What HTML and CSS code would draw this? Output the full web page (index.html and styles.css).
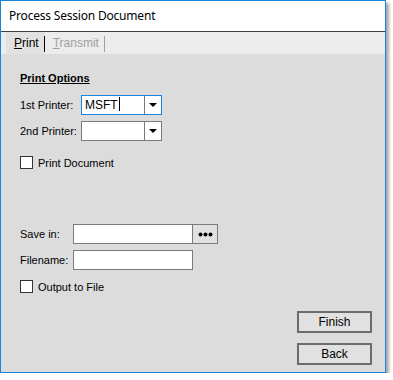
FILE: index.html
```html
<!DOCTYPE html>
<html>
<head>
  <title>Process Session Document</title>
  <link rel="stylesheet" href="styles.css">
</head>
<body>

  <div class="window">
    <div class="titlebar">Process Session Document</div>

    <div class="tabstrip">
      <div class="tab active"><u>P</u>rint</div>
      <div class="tab disabled"><u>T</u>ransmit</div>
    </div>

    <div class="panel">
      <div class="heading">Print Options</div>

      <div class="row first">
        <span class="label wide">1st Printer:</span>
        <div class="combo focused">
          <span class="combo-text">MSFT<span class="caret"></span></span>
          <span class="combo-btn"><span class="arrow"></span></span>
        </div>
      </div>

      <div class="row">
        <span class="label wide">2nd Printer:</span>
        <div class="combo">
          <span class="combo-text"></span>
          <span class="combo-btn"><span class="arrow"></span></span>
        </div>
      </div>

      <label class="check first-check">
        <span class="box"></span>
        <span>Print Document</span>
      </label>

      <div class="row save-row">
        <span class="label">Save in:</span>
        <div class="browse">
          <span class="browse-text"></span>
          <span class="browse-btn">
            <svg width="15" height="5" viewBox="0 0 15 5">
              <circle cx="2.5" cy="2.5" r="2" fill="#000"/>
              <circle cx="7.5" cy="2.5" r="2" fill="#000"/>
              <circle cx="12.5" cy="2.5" r="2" fill="#000"/>
            </svg>
          </span>
        </div>
      </div>

      <div class="row">
        <span class="label">Filename:</span>
        <div class="textbox"></div>
      </div>

      <label class="check second-check">
        <span class="box"></span>
        <span>Output to File</span>
      </label>

      <div class="actions">
        <button class="button">Finish</button>
        <button class="button">Back</button>
      </div>
    </div>
  </div>

</body>
</html>
```

FILE: styles.css
```css
body {
  margin: 0;
  background-color: #fff;
  font-family: "Liberation Sans", Arial, sans-serif;
  font-size: 11px;
  color: #000;
}

.window {
  width: 386px;
  height: 373px;
  box-sizing: border-box;
  border: 1px solid #1a83d6;
  display: flex;
  flex-direction: column;
  box-shadow: 3px 3px 3px rgba(0, 0, 0, 0.35);
}

.titlebar {
  height: 30px;
  line-height: 30px;
  padding-left: 8px;
  background-color: #fff;
  border-bottom: 1px solid #3f3f3f;
  font-family: "Noto Sans", sans-serif;
  font-size: 12px;
  letter-spacing: -0.2px;
}

/* tab header strip */
.tabstrip {
  height: 22px;
  display: flex;
  padding-left: 5px;
  background-color: #ececec;
}

.tab {
  line-height: 22px;
  padding: 0 6px 0 8px;
  position: relative;
  font-size: 12px;
}

.tab::after {
  content: "";
  position: absolute;
  right: 0;
  top: 4px;
  height: 16px;
  border-right: 1px solid #000;
}

.tab.active {
  background-color: #e2e2e2;
}

.tab.disabled {
  color: #a0a0a0;
}

.tab.disabled::after {
  border-right-color: #a0a0a0;
}

.panel {
  flex: 1;
  background-color: #dcdcdc;
  padding: 0 13px 0 18px;
  display: flex;
  flex-direction: column;
}

.heading {
  margin-top: 17px;
  padding-left: 1px;
  font-weight: bold;
  text-decoration: underline;
  line-height: 14px;
}

.row {
  display: flex;
  align-items: center;
  height: 20px;
  margin-top: 6px;
}

.row.first {
  margin-top: 10px;
}

.row.save-row {
  margin-top: 55px;
}

.label {
  width: 54px;
  padding-left: 1px;
  box-sizing: border-box;
}

.label.wide {
  width: 62px;
}

.combo {
  width: 81px;
  height: 20px;
  box-sizing: border-box;
  border: 1px solid #7a7a7a;
  display: flex;
  background-color: #fff;
}

.combo.focused {
  border-color: #1883e0;
}

.combo-text {
  flex: 1;
  padding-left: 3px;
  line-height: 18px;
  font-size: 12px;
}

.caret {
  display: inline-block;
  width: 1px;
  height: 14px;
  background-color: #000;
  vertical-align: -2px;
  margin-left: 1px;
}

.combo-btn {
  width: 16px;
  border-left: 1px solid #7a7a7a;
  display: flex;
  justify-content: center;
  align-items: center;
}

.arrow {
  width: 0;
  height: 0;
  border-left: 4px solid transparent;
  border-right: 4px solid transparent;
  border-top: 4px solid #000;
}

.check {
  display: flex;
  align-items: center;
  height: 13px;
  padding-left: 1px;
}

.first-check {
  margin-top: 15px;
}

.second-check {
  margin-top: 10px;
}

.box {
  width: 13px;
  height: 13px;
  box-sizing: border-box;
  border: 1px solid #333;
  background-color: #fff;
  margin-right: 5px;
}

.browse {
  width: 145px;
  height: 20px;
  box-sizing: border-box;
  border: 1px solid #7a7a7a;
  display: flex;
  background-color: #fff;
}

.browse-text {
  flex: 1;
}

.browse-btn {
  width: 24px;
  border-left: 1px solid #7a7a7a;
  background-color: #e1e1e1;
  display: flex;
  justify-content: center;
  align-items: center;
}

.textbox {
  width: 120px;
  height: 20px;
  box-sizing: border-box;
  border: 1px solid #7a7a7a;
  background-color: #fff;
}

.actions {
  display: flex;
  flex-direction: column;
  align-items: flex-end;
  gap: 10px;
  margin-top: 18px;
}

.button {
  width: 75px;
  height: 22px;
  box-sizing: border-box;
  border: 2px solid #6c6c6c;
  background-color: #e1e1e1;
  font-family: "Liberation Sans", Arial, sans-serif;
  font-size: 12px;
  padding: 0;
  color: #000;
}
```
